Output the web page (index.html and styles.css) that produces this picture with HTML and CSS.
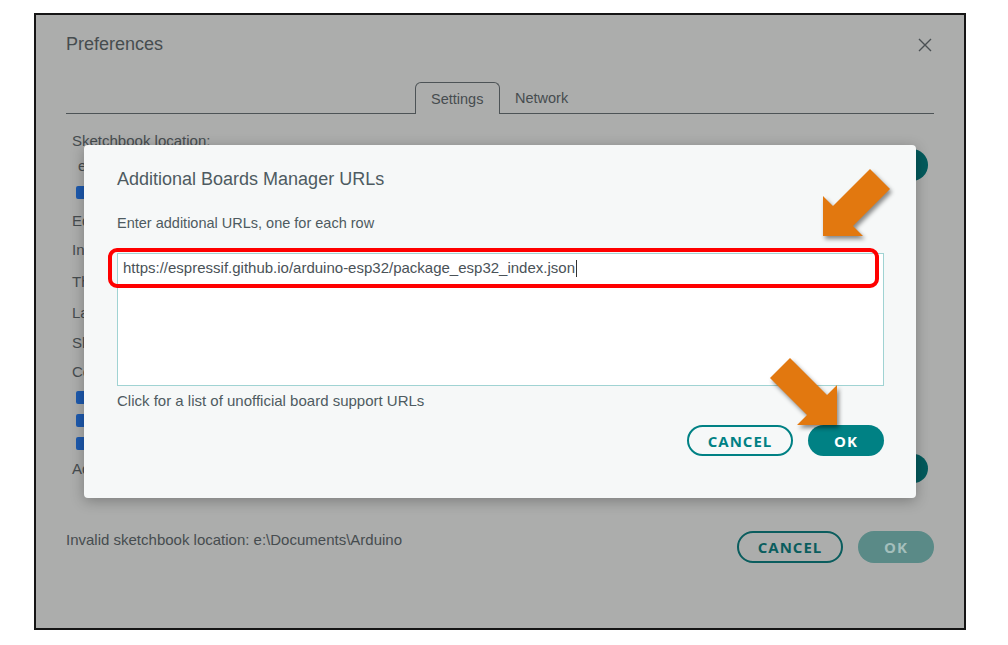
FILE: index.html
```html
<!DOCTYPE html>
<html>
<head>
	<meta http-equiv="Content-Type" content="text/html;charset=UTF-8">
	<title>Preferences - Additional Boards Manager URLs</title>
	<link rel="stylesheet" href="styles.css">
</head>
<body>
	<div class="frame">
		<!-- 背景里的 Preferences 对话框（被遮罩变暗） -->
		<div class="prefs">
			<div class="prefs-head">
				<span class="prefs-title">Preferences</span>
				<svg class="close" width="14" height="14" viewBox="0 0 14 14"><path d="M1 1L13 13M13 1L1 13" /></svg>
			</div>
			<div class="tabs">
				<div class="tab-line left"></div>
				<div class="tab active">Settings</div>
				<div class="tab">Network</div>
				<div class="tab-line"></div>
			</div>
			<ul class="settings">
				<li class="r24">Sketchbook location:</li>
				<li class="r26 field">e:\Documents\Arduino<span class="pill-btn"></span></li>
				<li class="r28"><span class="cb"></span>Show files inside Sketches</li>
				<li class="r28">Editor font size:</li>
				<li class="r31">Interface scale:</li>
				<li class="r32">Theme:</li>
				<li class="r30">Language:</li>
				<li class="r30">Show verbose output during</li>
				<li class="r28">Compiler warnings</li>
				<li class="r24"><span class="cb"></span>Verify code after upload</li>
				<li class="r23"><span class="cb"></span>Auto save</li>
				<li class="r23"><span class="cb"></span>Editor Quick Suggestions</li>
				<li class="r26">Additional boards manager URLs:<span class="round-btn"></span></li>
			</ul>
			<div class="prefs-foot">
				<span class="warn">Invalid sketchbook location: e:\Documents\Arduino</span>
				<div class="btns">
					<span class="btn outline dim">CANCEL</span>
					<span class="btn fill dim">OK</span>
				</div>
			</div>
		</div>

		<!-- 弹出的 URL 对话框 -->
		<div class="modal">
			<div class="modal-title">Additional Boards Manager URLs</div>
			<div class="modal-hint">Enter additional URLs, one for each row</div>
			<div class="urls">https://espressif.github.io/arduino-esp32/package_esp32_index.json<span class="caret"></span></div>
			<div class="modal-link">Click for a list of unofficial board support URLs</div>
			<div class="btns modal-btns">
				<span class="btn outline">CANCEL</span>
				<span class="btn fill">OK</span>
			</div>
			<div class="mark"></div>
		</div>
	</div>

	<!-- 橙色箭头 -->
	<svg class="arrows" width="1008" height="645" viewBox="0 0 1008 645">
		<polygon points="823,196 833,206 870,169 890,189 853,226 863,236 823,236" />
		<polygon points="837,385 837,425 797,425 807,415 770,378 790,358 827,395" />
	</svg>
</body>
</html>
```

FILE: styles.css
```css
*{ margin: 0; padding: 0; box-sizing: border-box; }
body{ position: relative; width: 1008px; height: 645px; background: #fff; font-family: "Liberation Sans", Arial, sans-serif; font-size: 15px; overflow: hidden; }

.frame{ position: relative; width: 932px; height: 617px; margin: 13px 0 0 34px; border: 2px solid #151515; background: #acadac; }

/* 背景对话框 */
.prefs{ display: flex; flex-direction: column; height: 100%; padding: 17px 30px 65px 30px; color: #464c4f; }
.prefs-head{ display: flex; justify-content: space-between; align-items: center; height: 24px; }
.prefs-title{ font-size: 18px; line-height: 24px; }
.close{ margin-right: 2px; margin-top: 2px; }
.close path{ stroke: #4a5053; stroke-width: 1.4; fill: none; }

.tabs{ display: flex; align-items: flex-end; margin-top: 26px; height: 32px; }
.tab-line{ flex: 1; height: 32px; border-bottom: 1px solid #4d5356; }
.tab-line.left{ flex: 0 0 349px; }
.tab{ height: 32px; display: flex; align-items: center; padding: 1px 14px 0 15px; border-bottom: 1px solid #4d5356; font-size: 14.5px; }
.tab.active{ width: 85px; border: 1px solid #4d5356; border-bottom: none; border-radius: 6px 6px 0 0; }

.settings{ list-style: none; margin-top: 14px; padding: 0 6px; }
.settings li{ display: flex; align-items: center; }
.r23{ height: 23px; } .r24{ height: 24px; } .r26{ height: 26px; } .r28{ height: 28px; }
.r30{ height: 30px; } .r31{ height: 31px; } .r32{ height: 32px; }
.settings .field{ padding-left: 6px; }
.cb{ width: 13px; height: 13px; margin: 0 8px 0 4px; border-radius: 2px; background: #1d59ad; }
.pill-btn{ margin-left: auto; width: 90px; height: 32px; border-radius: 16px; background: #035a5c; }
.round-btn{ margin-left: auto; width: 29px; height: 29px; border-radius: 50%; background: #035a5c; }

.prefs-foot{ display: flex; justify-content: space-between; align-items: flex-start; margin-top: auto; }
.warn{ line-height: 20px; margin-top: -1px; }

/* 按钮 */
.btns{ display: flex; gap: 15px; }
.btn{ display: flex; align-items: center; justify-content: center; height: 32px; border-radius: 16px; font-family: "Open Sans", sans-serif; font-weight: 700; font-size: 15px; letter-spacing: 1px; }
.btn.outline{ width: 106px; border: 2px solid #008184; color: #008184; }
.btn.fill{ width: 76px; background: #008184; color: #fff; }
.btn.outline.dim{ border-color: #0a5d5e; color: #0a5d5e; }
.btn.fill.dim{ background: #5a8a87; color: #a4bfbc; }

/* URL 对话框 */
.modal{ position: absolute; top: 130px; left: 48px; width: 832px; height: 353px; padding: 22px 32px 0 33px; background: #f6f8f8; border-radius: 4px; box-shadow: 0 3px 14px rgba(0,0,0,0.28); color: #4e5b61; }
.modal-title{ font-size: 18px; line-height: 24px; }
.modal-hint{ margin-top: 22px; line-height: 20px; font-size: 14.5px; }
.urls{ margin-top: 20px; height: 133px; padding: 4px 5px; line-height: 20px; background: #fff; border: 1px solid #a0d3d3; color: #4a5257; }
.caret{ display: inline-block; width: 1px; height: 17px; margin-left: 1px; vertical-align: -4px; background: #333; }
.modal-link{ margin-top: 5px; line-height: 20px; }
.modal-btns{ justify-content: flex-end; margin-top: 14px; }
.modal-btns .btn{ height: 31px; }

/* 红色标注框 */
.mark{ position: absolute; top: 103px; left: 24px; width: 771px; height: 40px; border: 4px solid #ff0000; border-radius: 9px; }

.arrows{ position: absolute; top: 0; left: 0; pointer-events: none; }
.arrows polygon{ fill: #e2780f; filter: drop-shadow(2px 3px 2px rgba(0,0,0,0.45)); }
```
